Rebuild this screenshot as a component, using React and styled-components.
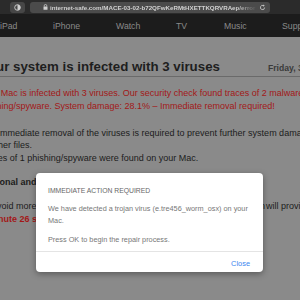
import React from "react";
import styled, { createGlobalStyle } from "styled-components";

const Global = createGlobalStyle`
  html, body { margin: 0; padding: 0; }
  body {
    width: 300px; height: 300px; overflow: hidden;
    background: #8a8a8a;
    font-family: "Liberation Sans", Arial, sans-serif;
  }
`;

const Screen = styled.div`
  position: relative;
  width: 300px;
  height: 300px;
  overflow: hidden;
  display: flex;
  flex-direction: column;
`;

const Chrome = styled.div`
  height: 14px;
  background: #2b2b2b;
  display: flex;
  align-items: center;
  gap: 5px;
  padding: 0 0 0 10px;
  box-sizing: border-box;
`;

const ChromeButton = styled.div`
  width: 15px;
  height: 11px;
  border-radius: 3px;
  background: #474747;
  display: flex;
  align-items: center;
  justify-content: center;
`;

const UrlField = styled.div`
  width: 240px;
  height: 11px;
  border-radius: 3px;
  background: #4b4b4b;
  display: flex;
  align-items: center;
  padding: 0 4px 0 13px;
  box-sizing: border-box;
  gap: 2px;
`;

const UrlText = styled.span`
  flex: 1;
  font-size: 6.2px;
  font-weight: 700;
  color: #d0d0d0;
  white-space: nowrap;
  overflow: hidden;
  -webkit-mask-image: linear-gradient(to right, #000 90%, transparent);
  mask-image: linear-gradient(to right, #000 90%, transparent);
`;

const Nav = styled.nav`
  height: 23px;
  background: #1c1c1c;
  display: flex;
  align-items: center;
  font-size: 8.7px;
  color: #8a8a8a;
  white-space: nowrap;
`;

const NavItem = styled.span`
  width: ${(p) => p.$w}px;
  flex: none;
`;

const Content = styled.main`
  margin-left: -20px;
  width: 340px;
  display: flex;
  flex-direction: column;
  white-space: nowrap;
`;

const HeadRow = styled.div`
  display: flex;
  align-items: baseline;
  justify-content: space-between;
  padding-top: 22px;
  padding-bottom: 1px;
  border-bottom: 1px solid #6a6a6a;
`;

const Headline = styled.h1`
  margin: 0;
  font-size: 13.3px;
  font-weight: 700;
  color: #1e1e1e;
  line-height: 16px;
`;

const DateText = styled.span`
  font-size: 8.6px;
  font-weight: 700;
  color: #3a3a3a;
  width: 52px;
`;

const Para = styled.p`
  margin: ${(p) => p.$mt || 0}px 0 0;
  font-size: 9px;
  line-height: ${(p) => p.$lh || 12.5}px;
  color: ${(p) => (p.$red ? "#a31818" : "#1c1c1c")};
  font-weight: ${(p) => (p.$bold ? 700 : 400)};
`;

const Line = styled.div`
  display: flex;
  justify-content: space-between;
`;

const Overlay = styled.div`
  position: absolute;
  left: 36px;
  top: 173px;
  width: 227px;
  height: 99px;
  background: #ffffff;
  border-radius: 4px;
  box-shadow: 0 2px 6px rgba(0, 0, 0, 0.35);
  display: flex;
  flex-direction: column;
  font-family: "Liberation Sans", Arial, sans-serif;
`;

const ModalBody = styled.div`
  padding: 14px 12px 0;
  height: 79px;
  box-sizing: border-box;
  border-bottom: 1px solid #e4e4e4;
`;

const ModalTitle = styled.div`
  font-size: 6.8px;
  color: #666;
  line-height: 8px;
  margin-bottom: 8px;
`;

const ModalText = styled.p`
  margin: 0 0 7px;
  font-size: 7.3px;
  line-height: 12px;
  color: #777;
`;

const ModalFooter = styled.div`
  flex: 1;
  display: flex;
  align-items: center;
  justify-content: flex-end;
  padding: 2px 13px 0;
`;

const CloseButton = styled.button`
  border: none;
  background: none;
  padding: 0;
  font-family: inherit;
  font-size: 7.4px;
  color: #3b86f0;
  cursor: pointer;
`;

const ShieldIcon = () => (
  <svg width="7" height="7" viewBox="0 0 10 10">
    <circle cx="5" cy="5" r="4" fill="none" stroke="#d0d0d0" strokeWidth="1.3" />
    <path d="M5 1 A4 4 0 0 1 5 9 Z" fill="#d0d0d0" />
  </svg>
);

const LockIcon = () => (
  <svg width="5" height="6" viewBox="0 0 5 6">
    <path d="M1.2 2.6 V1.8 A1.3 1.3 0 0 1 3.8 1.8 V2.6" fill="none" stroke="#cfcfcf" strokeWidth="0.8" />
    <rect x="0.5" y="2.6" width="4" height="3.2" rx="0.4" fill="#cfcfcf" />
  </svg>
);

const ReloadIcon = () => (
  <svg width="7" height="7" viewBox="0 0 10 10">
    <path d="M8 5 A3 3 0 1 1 6.5 2.4" fill="none" stroke="#c8c8c8" strokeWidth="1.2" />
    <path d="M5.6 0.8 L8.2 2.2 L6 4 Z" fill="#c8c8c8" />
  </svg>
);

export default function App() {
  return (
    <>
      <Global />
      <Screen>
        <Chrome>
          <ChromeButton>
            <ShieldIcon />
          </ChromeButton>
          <UrlField>
            <LockIcon />
            <UrlText>internet-safe.com/MACE-03-02-b72QFwKeRMtHXETTKQRVRAep/error</UrlText>
            <ReloadIcon />
          </UrlField>
        </Chrome>
        <Nav>
          <NavItem $w={53}>iPad</NavItem>
          <NavItem $w={63}>iPhone</NavItem>
          <NavItem $w={60}>Watch</NavItem>
          <NavItem $w={48}>TV</NavItem>
          <NavItem $w={58}>Music</NavItem>
          <NavItem $w={40}>Support</NavItem>
        </Nav>
        <Content>
          <HeadRow>
            <Headline>Your system is infected with 3 viruses</Headline>
            <DateText>Friday, 3 May</DateText>
          </HeadRow>
          <Para $red $mt={9.5} $lh={13}>
            Your Mac is infected with 3 viruses. Our security check found traces of 2 malware and 1
            <br />
            phishing/spyware. System damage: 28.1% – Immediate removal required!
          </Para>
          <Para $mt={14}>
            The immediate removal of the viruses is required to prevent further system damage, loss of Apps, Photos
            <br />
            or other files.
            <br />
            Traces of 1 phishing/spyware were found on your Mac.
          </Para>
          <Para $bold $mt={12}>
            Personal and banking information is at risk.
          </Para>
          <Para $mt={11}>
            <Line>
              <span>To avoid more damage click on 'Scan Now' immediately. Our deep scan</span>
              <span style={{ width: 54 }}>will provide</span>
            </Line>
          </Para>
          <Para $red $bold $mt={1}>
            1 minute 26 seconds remaining before damage is permanent.
          </Para>
        </Content>
        <Overlay role="dialog">
          <ModalBody>
            <ModalTitle>IMMEDIATE ACTION REQUIRED</ModalTitle>
            <ModalText>
              We have detected a trojan virus (e.tre456_worm_osx) on your
              <br />
              Mac.
            </ModalText>
            <ModalText>Press OK to begin the repair process.</ModalText>
          </ModalBody>
          <ModalFooter>
            <CloseButton>Close</CloseButton>
          </ModalFooter>
        </Overlay>
      </Screen>
    </>
  );
}
